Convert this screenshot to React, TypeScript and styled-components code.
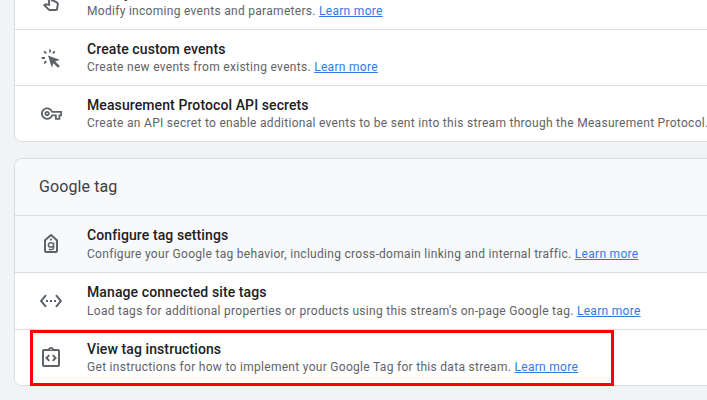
import React from "react";
import styled, { createGlobalStyle } from "styled-components";
import {
  MdOutlineTouchApp,
  MdOutlineVpnKey,
  MdSettingsEthernet,
  MdOutlineIntegrationInstructions,
} from "react-icons/md";

const Global = createGlobalStyle`
  html, body { margin: 0; padding: 0; width: 707px; height: 400px; overflow: hidden; background: #f1f3f4; }
  body { font-family: Roboto, "Liberation Sans", sans-serif; }
`;

const Page = styled.div`
  position: relative;
  width: 707px;
  height: 400px;
  overflow: hidden;
  background: #f1f3f4;
  padding: 0 0 0 14px;
  box-sizing: border-box;
`;

const Stack = styled.div`
  width: 760px;
  margin-top: -28px;
  display: flex;
  flex-direction: column;
  gap: 16px;
`;

const Card = styled.section`
  background: #fff;
  border: 1px solid #dadce0;
  border-radius: 8px;
  overflow: hidden;
`;

const CardHeader = styled.header`
  box-sizing: border-box;
  height: 56px;
  display: flex;
  align-items: center;
  padding: 0 0 2px 24px;
  background: #f8f9fa;
  font-size: 16px;
  letter-spacing: 0.1px;
  color: #3c4043;
`;

const Row = styled.div<{ $tinted?: boolean; $height: number }>`
  box-sizing: border-box;
  height: ${(p) => p.$height}px;
  display: flex;
  align-items: center;
  border-top: 1px solid #dadce0;
  background: ${(p) => (p.$tinted ? "#f8f9fa" : "#fff")};
  &:first-child { border-top: 0; }
`;

const IconSlot = styled.div`
  width: 72px;
  flex: none;
  display: flex;
  justify-content: center;
  color: #5f6368;
  font-size: 24px;
  line-height: 0;
`;

const KeyGlyph = styled(MdOutlineVpnKey)`
  font-size: 21px;
`;

const Texts = styled.div<{ $tall: boolean }>`
  white-space: nowrap;
  margin-top: ${(p) => (p.$tall ? "-2px" : "-1px")};
`;

const Title = styled.div`
  font-size: 14px;
  font-weight: 500;
  line-height: 20px;
  letter-spacing: 0.1px;
  color: #202124;
`;

const Description = styled.div<{ $tall: boolean }>`
  margin-top: ${(p) => (p.$tall ? "1px" : "0")};
  font-size: 12px;
  line-height: 16px;
  letter-spacing: 0.295px;
  color: #5f6368;
`;

const LearnMore = styled.a`
  color: #3578e5;
  text-decoration: underline;
`;

const Highlight = styled.div`
  position: absolute;
  left: 30px;
  top: 330px;
  width: 584px;
  height: 56px;
  box-sizing: border-box;
  border: 3px solid #ff0000;
  pointer-events: none;
`;

const ClickIcon = () => (
  <svg width="24" height="24" viewBox="0 0 24 24" fill="currentColor">
    <path d="M9 9.6l11.6 4.2-4.4 1.7 4.6 4.6-1.8 1.7-4.6-4.6-1.6 4.4z" />
    <path d="M10.1 3.4h1.8v3.2h-1.8zM2.6 11.1h3.4v1.8H2.6zM4.5 6l1.3-1.3 2.1 2.1-1.3 1.3zM16.5 6l-2.1 2.1-1.3-1.3 2.1-2.1zM4.5 16.7l2.1-2.1 1.3 1.3-2.1 2.1z" />
  </svg>
);

const TagIcon = () => (
  <svg width="24" height="24" viewBox="0 0 24 24" fill="none" stroke="currentColor">
    <path d="M6 8.2 12 3l6 5.2V19a1 1 0 0 1-1 1H7a1 1 0 0 1-1-1z" strokeWidth="2" strokeLinejoin="round" />
    <circle cx="12" cy="7.6" r="1.1" fill="currentColor" stroke="none" />
    <path d="M14.6 10.8v5.2a1.7 1.7 0 0 1-1.7 1.6H9.8M14.6 12.9a2.6 2.2 0 1 1-5.2 0 2.6 2.2 0 0 1 5.2 0z" strokeWidth="1.5" />
  </svg>
);

type Item = {
  icon: React.ReactNode;
  title: string;
  text: string;
  height?: number;
  tinted?: boolean;
  noLink?: boolean;
};

const Entry = ({ icon, title, text, height = 56, tinted, noLink }: Item) => (
  <Row $tinted={tinted} $height={height}>
    <IconSlot>{icon}</IconSlot>
    <Texts $tall={height > 56}>
      <Title>{title}</Title>
      <Description $tall={height > 56}>
        {text}
        {noLink ? null : (
          <>
            {" "}
            <LearnMore href="#">Learn more</LearnMore>
          </>
        )}
      </Description>
    </Texts>
  </Row>
);

export default function App() {
  return (
    <Page>
      <Global />
      <Stack>
        <Card>
          <Entry icon={<MdOutlineTouchApp />} title="Modify events" text="Modify incoming events and parameters." />
          <Entry icon={<ClickIcon />} title="Create custom events" text="Create new events from existing events." />
          <Entry
            noLink
            icon={<KeyGlyph />}
            title="Measurement Protocol API secrets"
            text="Create an API secret to enable additional events to be sent into this stream through the Measurement Protocol."
          />
        </Card>
        <Card>
          <CardHeader>Google tag</CardHeader>
          <Entry
            tinted
            height={57}
            icon={<TagIcon />}
            title="Configure tag settings"
            text="Configure your Google tag behavior, including cross-domain linking and internal traffic."
          />
          <Entry
            height={57}
            icon={<MdSettingsEthernet />}
            title="Manage connected site tags"
            text="Load tags for additional properties or products using this stream's on-page Google tag."
          />
          <Entry
            icon={<MdOutlineIntegrationInstructions />}
            title="View tag instructions"
            text="Get instructions for how to implement your Google Tag for this data stream."
          />
        </Card>
      </Stack>
      <Highlight />
    </Page>
  );
}
